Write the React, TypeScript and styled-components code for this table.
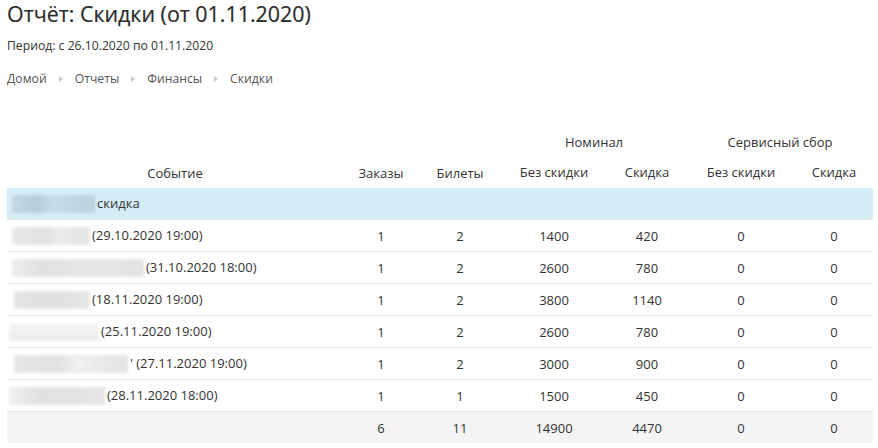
import React from "react";
import styled, { createGlobalStyle } from "styled-components";

const Global = createGlobalStyle`
  html, body { margin: 0; padding: 0; background: #fff; }
  body { font-family: "Open Sans", "Liberation Sans", sans-serif; color: #333; }
`;

const Page = styled.div`
  padding: 0 5px 0 7px;
  width: 866px;
`;

const Title = styled.h1`
  margin: 0;
  font-size: 21.4px;
  font-weight: 400;
  line-height: 28px;
  color: #2b2b2b;
  -webkit-text-stroke: 0.2px #2b2b2b;
`;

const Period = styled.div`
  margin-top: 10px;
  font-size: 12.2px;
  line-height: 16px;
  color: #333;
`;

const Crumbs = styled.nav`
  display: flex;
  align-items: center;
  gap: 12px;
  margin-top: 16px;
  font-size: 12.2px;
  line-height: 18px;
  color: #555;
`;

const Sep = styled.span`
  width: 0;
  height: 0;
  border-top: 3px solid transparent;
  border-bottom: 3px solid transparent;
  border-left: 4px solid #c8c8c8;
`;

const Table = styled.table`
  margin-top: 39px;
  width: 866px;
  border-collapse: collapse;
  table-layout: fixed;
  font-size: 13px;
  color: #333;
`;

const Th = styled.th<{ $bottom?: boolean }>`
  font-weight: 400;
  text-align: center;
  height: 30px;
  padding: 0 0 ${(p) => (p.$bottom ? "5px" : "0")};
  vertical-align: ${(p) => (p.$bottom ? "bottom" : "middle")};
  color: #333;
`;

type RowKind = "group" | "plain" | "total";

const Tr = styled.tr<{ $kind: RowKind }>`
  background: ${(p) =>
    p.$kind === "group" ? "#d4edf7" : p.$kind === "total" ? "#f4f4f4" : "#fff"};
  border-top: 1px solid ${(p) => (p.$kind === "group" ? "#fff" : "#e6e6e6")};
`;

const Td = styled.td`
  height: 31px;
  padding: 0;
  text-align: center;
  vertical-align: middle;
  white-space: nowrap;
`;

const EventTd = styled(Td)`
  text-align: left;
  padding-left: 5px;
`;

const Blur = styled.span<{ $w: number; $shift: number; $tone: string }>`
  display: inline-block;
  vertical-align: middle;
  width: ${(p) => p.$w}px;
  height: 18px;
  margin-left: ${(p) => p.$shift}px;
  margin-right: 2px;
  background: ${(p) => p.$tone};
  filter: blur(1.5px);
  opacity: 0.75;
`;

const widths = [336, 76, 82, 106, 80, 108, 78];

const rows = [
  { w: 78, s: 0, tone: "linear-gradient(90deg,#e2e2e2,#d8d8d8 40%,#e4e4e4 60%,#dcdcdc)", t: "(29.10.2020 19:00)", v: [1, 2, 1400, 420, 0, 0] },
  { w: 132, s: 0, tone: "linear-gradient(90deg,#e8e8e8,#d8d8d8 20%,#e0e0e0 60%,#dadada)", t: "(31.10.2020 18:00)", v: [1, 2, 2600, 780, 0, 0] },
  { w: 76, s: 2, tone: "linear-gradient(90deg,#dddddd,#d6d6d6 50%,#e0e0e0)", t: "(18.11.2020 19:00)", v: [1, 2, 3800, 1140, 0, 0] },
  { w: 90, s: -3, tone: "linear-gradient(180deg,#f2f2f2,#e6e6e6)", t: "(25.11.2020 19:00)", v: [1, 2, 2600, 780, 0, 0] },
  { w: 114, s: 2, tone: "linear-gradient(90deg,#dedede,#d9d9d9 40%,#ececec 55%,#d8d8d8)", t: "' (27.11.2020 19:00)", v: [1, 2, 3000, 900, 0, 0] },
  { w: 96, s: -3, tone: "linear-gradient(90deg,#ececec,#d8d8d8 30%,#dedede)", t: "(28.11.2020 18:00)", v: [1, 1, 1500, 450, 0, 0] },
];

export default function App() {
  return (
    <>
      <Global />
      <Page>
        <Title>Отчёт: Скидки (от 01.11.2020)</Title>
        <Period>Период: с 26.10.2020 по 01.11.2020</Period>
        <Crumbs>
          <span>Домой</span>
          <Sep />
          <span>Отчеты</span>
          <Sep />
          <span>Финансы</span>
          <Sep />
          <span>Скидки</span>
        </Crumbs>
        <Table>
          <colgroup>
            {widths.map((w, i) => (
              <col key={i} style={{ width: w }} />
            ))}
          </colgroup>
          <thead>
            <tr>
              <Th rowSpan={2} $bottom>Событие</Th>
              <Th rowSpan={2} $bottom>Заказы</Th>
              <Th rowSpan={2} $bottom>Билеты</Th>
              <Th colSpan={2}>Номинал</Th>
              <Th colSpan={2}>Сервисный сбор</Th>
            </tr>
            <tr>
              <Th>Без скидки</Th>
              <Th>Скидка</Th>
              <Th>Без скидки</Th>
              <Th>Скидка</Th>
            </tr>
          </thead>
          <tbody>
            <Tr $kind="group">
              <EventTd colSpan={7}>
                <Blur $w={83} $shift={0} $tone="linear-gradient(90deg,#bcd3dc,#aac4cf 30%,#c0d7e0 50%,#b4cbd5)" />
                скидка
              </EventTd>
            </Tr>
            {rows.map((r, i) => (
              <Tr $kind="plain" key={i}>
                <EventTd>
                  <Blur $w={r.w} $shift={r.s} $tone={r.tone} />
                  {r.t}
                </EventTd>
                {r.v.map((x, j) => (
                  <Td key={j}>{x}</Td>
                ))}
              </Tr>
            ))}
            <Tr $kind="total">
              <EventTd />
              {[6, 11, 14900, 4470, 0, 0].map((x, j) => (
                <Td key={j}>{x}</Td>
              ))}
            </Tr>
          </tbody>
        </Table>
      </Page>
    </>
  );
}
